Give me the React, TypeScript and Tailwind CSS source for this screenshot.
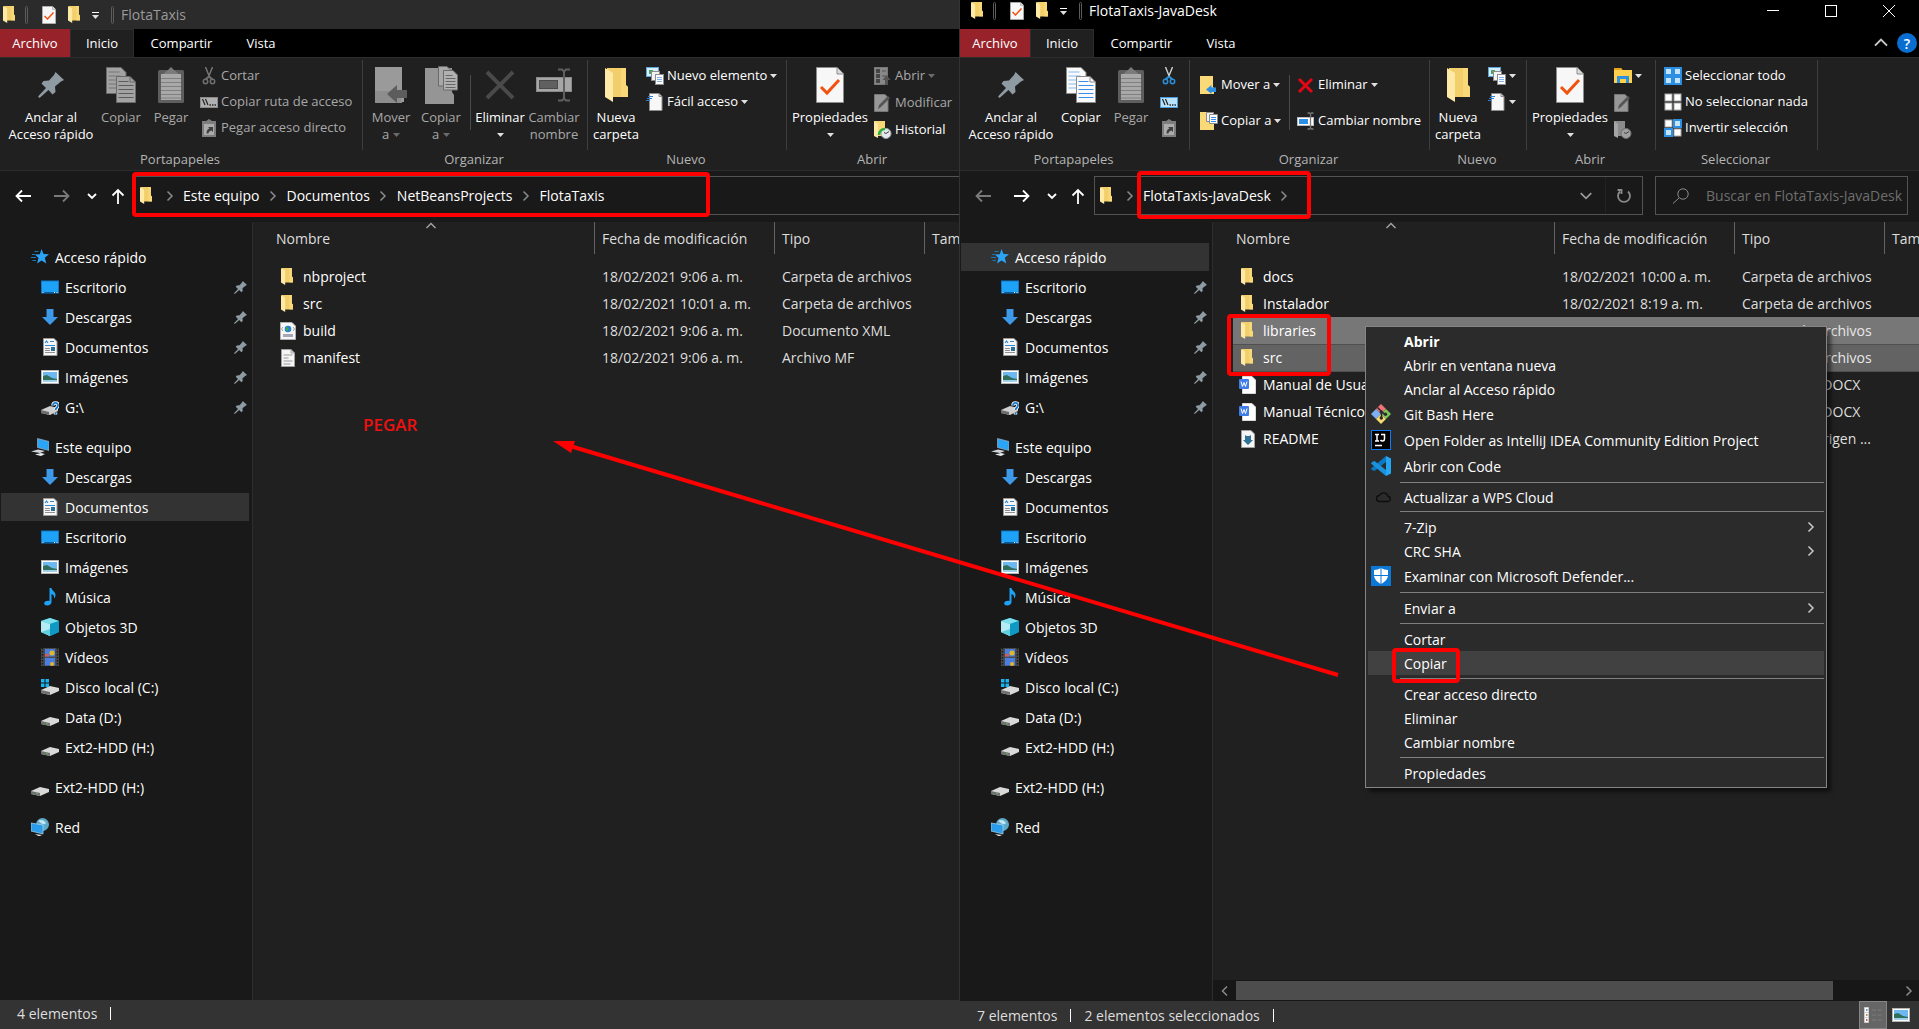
import React from "react";
import type { ReactNode } from "react";

/* ---------- icons ---------- */

function FolderIcon({ big }: { big?: boolean }) {
  return (
    <svg viewBox="0 0 23 34" preserveAspectRatio="none" className={big ? "h-[34px] w-[23px]" : "h-[17px] w-[12px]"}>
      <path d="M2 0h19v17l2 2v10H2z" fill="#f3cf6b" />
      <path d="M2 0h19v17l2 2v10h-7V0z" fill="#fbdc7f" opacity=".7" />
      <path d="M0 0l8 5v29l-8-5z" fill="#ffe9a6" />
    </svg>
  );
}

function CheckDoc({ big }: { big?: boolean }) {
  return (
    <svg viewBox="0 0 28 36" preserveAspectRatio="none" className={big ? "h-9 w-7" : "h-[18px] w-[14px]"}>
      <path d="M.5.5H21L27.500 7v28.500H.5z" fill="#f7f7f7" stroke="#8c8c8c" />
      <path d="M21 .5V7h6.500" fill="#dcdcdc" stroke="#8c8c8c" />
      <path d="M5 20l6 6 12-13" fill="none" stroke="#f0530f" strokeWidth="3" />
    </svg>
  );
}

function PinIcon({ small }: { small?: boolean }) {
  return (
    <svg viewBox="0 0 26 26" className={small ? "size-[13px]" : "size-[26px]"}>
      <path
        d="M17.500 0L26 8l-3 1.500-6 5 .5 5.500-3 2.500-4-4.500L1.500 26 0 24.500 8 16 3.500 11.500 5.500 9l5.500-.5L16 3z"
        fill="#8f9ba3"
      />
    </svg>
  );
}

function CopyDocs({ muted }: { muted?: boolean }) {
  const page = muted ? "#a3a3a3" : "#fafafa";
  const line = muted ? "#5b5b5b" : "#3b8ee8";
  const edge = muted ? "#6a6a6a" : "#8c8c8c";
  return (
    <svg viewBox="0 0 30 36" className="h-9 w-[30px]">
      <path d="M.5.5H15L20 5.500v21H.5z" fill={page} stroke={edge} />
      <path d="M2.500 5h11M2.500 9h12M2.500 13h8M2.500 17h8M2.500 21h8" stroke={line} opacity=".6" />
      <path d="M10.500 9.500H24l5.500 5.500v20.500h-19z" fill={page} stroke={edge} />
      <path d="M24 9.500V15h5.500" fill="none" stroke={edge} />
      <path d="M12.500 14.500h10M12.500 18.500h15M12.500 22.500h15M12.500 26.500h15M12.500 30.500h15" stroke={line} />
    </svg>
  );
}

function PasteIcon() {
  return (
    <svg viewBox="0 0 26 36" className="h-9 w-[26px]">
      <rect y="3" width="26" height="33" rx="1.500" fill="#5e5e5e" />
      <rect x="3" y="7" width="20" height="26" fill="#a9a9a9" />
      <path d="M5 7l5-4 3-3 3 3 5 4z" fill="#7b7b7b" />
      <path d="M3 11.500h20M3 15.500h20M3 19.500h20M3 23.500h20M3 27.500h20M3 31h20" stroke="#808080" />
    </svg>
  );
}

function ScissorsIcon({ muted }: { muted?: boolean }) {
  const c = muted ? "#6f6f6f" : "#2a8fd8";
  const b = muted ? "#7a7a7a" : "#c9d1d6";
  return (
    <svg viewBox="0 0 18 18" className="size-[18px]">
      <path d="M5.500 0l4 10M12.500 0l-4 10" stroke={b} strokeWidth="1.400" fill="none" />
      <path d="M9 9.500l-3.500 3M9 9.500l3.500 3" stroke={c} strokeWidth="2" />
      <circle cx="5.500" cy="14.500" r="2.200" fill="none" stroke={c} strokeWidth="1.500" />
      <circle cx="12.500" cy="14.500" r="2.200" fill="none" stroke={c} strokeWidth="1.500" />
    </svg>
  );
}

function PathIcon({ muted }: { muted?: boolean }) {
  return (
    <svg viewBox="0 0 18 18" className="size-[18px]">
      <rect x=".5" y="4.500" width="17" height="10" fill={muted ? "#b0b0b0" : "#b9e2fb"} stroke={muted ? "#8a8a8a" : "#4d9bd6"} />
      <path d="M2.500 6l2.500 6M5.500 6L8 12" stroke="#222" strokeWidth="1.200" />
      <path d="M9.500 12h1.400M12 12h1.400M14.500 12h1.400" stroke="#222" strokeWidth="1.400" />
    </svg>
  );
}

function PasteShortcutIcon() {
  return (
    <svg viewBox="0 0 18 18" className="size-[18px]">
      <rect x="2" y="2" width="14" height="16" fill="#7d7d7d" />
      <path d="M6 2l3-2 3 2z" fill="#7d7d7d" />
      <rect x="4" y="5" width="10" height="11" fill="#ababab" />
      <path d="M6.500 14.500c0-3 1-4.500 3-5L8 8h5v5l-1.500-1.500c-2 .5-3 1.500-3 3z" fill="#3f3f3f" />
    </svg>
  );
}

function MoveToBig() {
  return (
    <svg viewBox="0 0 32 36" className="h-9 w-8">
      <rect width="27" height="36" fill="#8d8d8d" />
      <path d="M0 0h27v24l2 3v8h-3V24H0z" fill="#9a9a9a" />
      <path d="M12 27l10-9v5h10v8H22v5z" fill="#5c5c5c" />
    </svg>
  );
}

function CopyToBig() {
  return (
    <svg viewBox="0 0 33 38" className="h-[38px] w-[33px]">
      <path d="M0 2h27v24l2 3v9H0z" fill="#959595" />
      <path d="M13.500.5H22L25.500 4v16h-12z" fill="#a8a8a8" stroke="#6a6a6a" />
      <path d="M18.500 4.500H28L32.500 9v15h-14z" fill="#b1b1b1" stroke="#6a6a6a" />
      <path d="M20.500 9.500h7M20.500 12.500h10M20.500 15.500h10M20.500 18.500h10M20.500 21.500h10" stroke="#666" />
    </svg>
  );
}

function DeleteBig() {
  return (
    <svg viewBox="0 0 30 30" className="size-[30px]">
      <path d="M2 2l26 26M28 2L2 28" stroke="#4a4a4a" strokeWidth="4" />
    </svg>
  );
}

function RenameBig() {
  return (
    <svg viewBox="0 0 36 34" className="h-[34px] w-9">
      <rect x=".5" y="9.500" width="35" height="14" fill="#a6a6a6" stroke="#8a8a8a" />
      <rect x="3.500" y="12.500" width="18" height="8" fill="#606060" stroke="#4a4a4a" />
      <path d="M22 1.500h4l2 2 2-2h4M28 3v28M22 32.500h4l2-2 2 2h4" fill="none" stroke="#5f5f5f" strokeWidth="2" />
    </svg>
  );
}

function NewItemIcon() {
  return (
    <svg viewBox="0 0 18 18" className="size-[18px]">
      <rect x=".5" y=".5" width="12" height="9" fill="#d7eefc" stroke="#5aa7d8" />
      <rect x="3" y="3" width="4" height="4" fill="#4aa564" />
      <rect x="5.500" y="4.500" width="8" height="9" fill="#f2f2f2" stroke="#8c8c8c" />
      <rect x="9.500" y="7.500" width="8" height="10" fill="#fff" stroke="#8c8c8c" />
      <path d="M11 10.500h5M11 12.500h5M11 14.500h5" stroke="#7fb2e8" />
    </svg>
  );
}

function EasyAccessIcon() {
  return (
    <svg viewBox="0 0 18 18" className="size-[18px]">
      <path d="M3.500.5h9.500l3 3v14H3.500z" fill="#f7f7f7" stroke="#8c8c8c" />
      <path d="M13 .5v3h3" fill="none" stroke="#8c8c8c" />
      <path d="M2 3.500h5M1 5.500h5M0 7.500h4" stroke="#2b7fd0" />
    </svg>
  );
}

function OpenAppIcon() {
  return (
    <svg viewBox="0 0 18 18" className="size-[18px]">
      <rect x=".5" y=".5" width="13" height="17" fill="#888" stroke="#777" />
      <path d="M2 2h4v4H2zM2 7h4v4H2zM2 12h4v4H2z" fill="#444" />
      <path d="M8 4h4M8 9h4" stroke="#555" />
      <path d="M11 18v-5H8.500L12.500 8l4 5H14v5z" fill="#555" />
    </svg>
  );
}

function OpenFolderIcon() {
  return (
    <svg viewBox="0 0 18 18" className="size-[18px]">
      <path d="M0 1h7l1.500 2H18v13H0z" fill="#ffd04c" />
      <path d="M0 1h7l1.500 2H0z" fill="#e8a21b" />
      <path d="M3 16V9h12v7h-3v-4H6v4z" fill="#2f8fe0" />
    </svg>
  );
}

function EditIcon() {
  return (
    <svg viewBox="0 0 18 18" className="size-[18px]">
      <path d="M.5.5H11l3 3v14H.5z" fill="#979797" stroke="#777" />
      <path d="M4 15l1-4 9-9 2 2-9 9z" fill="#555" />
    </svg>
  );
}

function HistoryIcon({ muted }: { muted?: boolean }) {
  return (
    <svg viewBox="0 0 18 18" className="size-[18px]">
      <path d="M0 0h11v15H0z" fill={muted ? "#8b8b8b" : "#f8d775"} />
      <path d="M0 0l4 3v14l-4-2z" fill={muted ? "#a5a5a5" : "#ffe9a6"} />
      <circle cx="12" cy="12.500" r="5" fill={muted ? "#a0a0a0" : "#e4e8ea"} stroke={muted ? "#6d6d6d" : "#9aa4aa"} />
      <path d="M12 12.500l3-2M12 12.500l-2-1" stroke="#444" />
      {!muted && <path d="M5 14c0-4 3-6 6-6" fill="none" stroke="#2cae3a" strokeWidth="2.500" />}
    </svg>
  );
}

function MoveToSmall() {
  return (
    <svg viewBox="0 0 18 18" className="size-[18px]">
      <path d="M0 0h13v11l1 1v6H0z" fill="#f9d978" />
      <path d="M6 13.500L11.500 9v2.500H16v4.500h-4.500V18z" fill="#2d8fe3" />
    </svg>
  );
}

function CopyToSmall() {
  return (
    <svg viewBox="0 0 18 18" className="size-[18px]">
      <path d="M0 0h13v11l1 1v6H0z" fill="#f9d978" />
      <path d="M6.500.5h7v9h-7z" fill="#f2f2f2" stroke="#8c8c8c" />
      <path d="M9.500 2.500h8v9h-8z" fill="#fff" stroke="#8c8c8c" />
      <path d="M11 5.500h5M11 7.500h5M11 9.500h5" stroke="#3b8ee8" />
    </svg>
  );
}

function RedX() {
  return (
    <svg viewBox="0 0 18 18" className="size-[18px]">
      <path d="M2 3l13 13M15 3L2 16" stroke="#e30613" strokeWidth="3" />
    </svg>
  );
}

function RenameSmall() {
  return (
    <svg viewBox="0 0 18 18" className="size-[18px]">
      <rect x=".5" y="5.500" width="16" height="8" fill="#fff" stroke="#bbb" />
      <rect x="2" y="7" width="9" height="5" fill="#2d8fe3" />
      <path d="M10.500 1h2l1 1 1-1h2M13.500 2v14M10.500 17h2l1-1 1 1h2" fill="none" stroke="#777" strokeWidth="1.300" />
    </svg>
  );
}

function SelectGrid({ on }: { on: boolean[] }) {
  return (
    <svg viewBox="0 0 18 18" className="size-[18px]">
      {on.map((s, i) => (
        <rect
          key={i}
          x={(i % 2) * 9 + 1}
          y={Math.floor(i / 2) * 9 + 1}
          width="7"
          height="7"
          fill={s ? "#c3e5fb" : "#fff"}
          stroke={s ? "#2d8fe3" : "#a8a8a8"}
          strokeWidth={s ? 2 : 1}
        />
      ))}
    </svg>
  );
}

const icons: Record<string, ReactNode> = {
  star: (
    <>
      <path d="M10.500 1l2 5 5.500.3-4.200 3.500 1.500 5.700-4.700-3L6 15.500l1.500-5.500L4 6.500l4.800-.3z" fill="#2ba4f5" />
      <path d="M3.500 3.500h4M1 6.500h3.500M0 9.500h5M1.500 12.500h3.500" stroke="#1c76b8" />
    </>
  ),
  desktop: (
    <>
      <rect x=".5" y="3" width="17" height="12" fill="#1ea2f8" stroke="#0f78c8" />
      <path d="M1 14.500h16" stroke="#0b5f9e" />
      <path d="M1.500 14.500h1M13 14.500h1M15.500 14.500h1" stroke="#fff" />
    </>
  ),
  download: <path d="M5.500 1h7v8h4.500l-8 8-8-8h4.500z" fill="#3d9ae8" />,
  document: (
    <>
      <path d="M2.500.5H13l3 3v14H2.500z" fill="#f7f7f7" stroke="#9a9a9a" />
      <path d="M4 5l1.500-2L7 5M9 3.500h4M4 7.500h10" stroke="#2b8ad6" strokeWidth="1.200" fill="none" />
      <path d="M4 10.500h5M4 12.500h5M4 14.500h10" stroke="#8f8f8f" />
      <rect x="10" y="9" width="4" height="4" fill="#2b6f9a" />
    </>
  ),
  image: (
    <>
      <rect x=".5" y="2.500" width="17" height="13" fill="#fff" stroke="#b5b5b5" />
      <rect x="2" y="4" width="14" height="10" fill="#6db8f0" />
      <path d="M2 8l4-1 5 3 5 1v3H2z" fill="#2f6f5c" />
      <path d="M2 12h14v2H2z" fill="#9fd0e8" />
    </>
  ),
  unknownDrive: (
    <>
      <path d="M0 12l9-4 8 2v3l-8 4-9-2z" fill="#cfcfcf" />
      <path d="M0 12l8 2v3l-8-2z" fill="#6c6c6c" />
      <path d="M12 7.500c0-3.500 5-3.500 5 0 0 2-2.500 2.500-2.500 4.500M14.500 14.500v2" fill="none" stroke="#fff" strokeWidth="3.500" />
      <path d="M12 7.500c0-3.500 5-3.500 5 0 0 2-2.500 2.500-2.500 4.500M14.500 14.500v2" fill="none" stroke="#1f78c4" strokeWidth="1.800" />
    </>
  ),
  pc: (
    <>
      <path d="M6.500.5l11.500 3v9l-11.500-3z" fill="#2ba4f5" stroke="#9fb0bb" strokeWidth=".7" />
      <path d="M0 13.500l7-2 7 1.500-5 2z" fill="#cfd6da" />
      <path d="M4 16.500l6-1.500 4 1-4 2z" fill="#e8ecee" />
    </>
  ),
  music: <path d="M8.500 0h2c.3 3 4 3.500 4 7 0 2-1 3-1.500 3.500.5-3-1-4-2.500-4.500v8c0 2-2 3.500-4.300 3.500-2 0-3-1-3-2.300C3.200 13.500 5.500 12.500 8.500 13z" fill="#1ea2f8" />,
  cube: (
    <>
      <path d="M9 0l9 3v11l-9 4-9-4V3z" fill="#16b4d8" />
      <path d="M9 0l9 3-9 3-9-3z" fill="#7fe0ec" />
      <path d="M0 3l9 3v12l-9-4z" fill="#b5ecf3" />
      <path d="M0 14l9-3v7z" fill="#5fd0dc" />
      <path d="M9 6l9-3v11l-9 4z" fill="#1098c4" />
    </>
  ),
  video: (
    <>
      <rect width="18" height="18" fill="#4a4a4a" />
      <path d="M1.500 0v18M16.500 0v18" stroke="#1a1a1a" strokeWidth="1.500" strokeDasharray="1.500 1.500" />
      <rect x="4" y="1" width="10" height="7.500" fill="#4a7ee0" />
      <rect x="4" y="10" width="10" height="7.500" fill="#4a7ee0" />
      <circle cx="11" cy="5" r="2.500" fill="#e0b92b" />
      <path d="M4 6h4v2.500H4z" fill="#d35a5a" />
      <circle cx="11" cy="16" r="2" fill="#e0b92b" />
    </>
  ),
  osDrive: (
    <>
      <path d="M0 12l9-4 9 2v3l-9 4-9-2z" fill="#d9d9d9" />
      <path d="M0 12l9 2v3l-9-2z" fill="#707070" />
      <path d="M0 1h3.500v3.500H0zM4.500 1H8v3.500H4.500zM0 5.500h3.500V9H0zM4.500 5.500H8V9H4.500z" fill="#19b5f1" />
    </>
  ),
  drive: (
    <>
      <path d="M0 13l9-4 9 2v3l-9 4-9-2z" fill="#d9d9d9" />
      <path d="M0 13l9 2v3l-9-2z" fill="#707070" />
      <path d="M5 15.500l1.500.3" stroke="#4fd05a" />
    </>
  ),
  network: (
    <>
      <circle cx="11.500" cy="6.500" r="6.500" fill="#5fa9c8" />
      <path d="M7 3c3-2 6-1 8 2-2 3-5 0-8-2z" fill="#c5e6f0" />
      <path d="M0 5l12 2v9L0 13z" fill="#2b9cea" stroke="#a9d8f5" strokeWidth=".7" />
      <path d="M4 16l7 1-3 1.500z" fill="#d5dde1" />
    </>
  ),
  xml: (
    <>
      <path d="M1.500.5H13l3.500 3.500v13.500h-15z" fill="#f7f7f7" stroke="#b0b0b0" />
      <circle cx="9" cy="7" r="3.300" fill="#2b7fd0" />
      <path d="M7 5l2.500 1L9 9 7 8z" fill="#3fae49" />
      <path d="M4 5L2.500 7 4 9M14 5l1.500 2L14 9" fill="none" stroke="#888" strokeWidth=".8" />
      <path d="M4 13.500h10" stroke="#a6a6b8" strokeWidth="3" />
    </>
  ),
  text: (
    <>
      <path d="M2.500.5H12l3.500 3.500v13.500h-13z" fill="#f5f5f5" stroke="#a0a0a0" />
      <path d="M12 .5V4h3.500" fill="none" stroke="#a0a0a0" />
      <path d="M4.500 6h9M4.500 9h5M4.500 12h9M4.500 15h7" stroke="#9a9a9a" />
    </>
  ),
  docx: (
    <>
      <path d="M3.500.5H13L16.500 4v13.500h-13z" fill="#fff" stroke="#d9d9d9" />
      <rect y="3" width="10" height="10" rx="1" fill="#3f7ee8" />
      <path d="M2 5.500l1.500 5L5 6.500l1.500 4 1.500-5" fill="none" stroke="#fff" />
    </>
  ),
  markdown: (
    <>
      <path d="M2.500.5H12l3.500 3.500v13.500h-13z" fill="#f5f5f5" stroke="#a0a0a0" />
      <path d="M6 5l1.500 1h3L12 5v5h2l-5 5-5-5h2z" fill="#2f7396" />
    </>
  ),
};

function Icon({ name }: { name: string }) {
  return (
    <svg viewBox="0 0 18 18" className="size-[18px] shrink-0">
      {icons[name]}
    </svg>
  );
}

function Chevron({ dir, className }: { dir: "right" | "left" | "down" | "up"; className: string }) {
  const d = {
    right: "M3.500 1.500L8 6l-4.500 4.500",
    left: "M8 1.500L3.500 6 8 10.500",
    down: "M1.500 3.500L6 8l4.500-4.500",
    up: "M1.500 8L6 3.500 10.500 8",
  }[dir];
  return (
    <svg viewBox="0 0 12 12" className={className}>
      <path d={d} fill="none" stroke="currentColor" strokeWidth="1.500" />
    </svg>
  );
}

function Caret({ muted }: { muted?: boolean }) {
  return (
    <svg viewBox="0 0 7 4" className={muted ? "h-1 w-[7px] text-[#6b6b6b]" : "h-1 w-[7px] text-[#e0e0e0]"}>
      <path d="M0 0h7L3.500 4z" fill="currentColor" />
    </svg>
  );
}

/* ---------- ribbon ---------- */

function BigButton({ icon, lines, width, muted, caret }: { icon: ReactNode; lines: string[]; width: string; muted?: boolean; caret?: boolean }) {
  return (
    <button type="button" className={`flex shrink-0 flex-col items-center pt-[7px] ${width} ${muted ? "text-[#a8a8a8]" : "text-white"}`}>
      <span className="flex h-9 items-center justify-center">{icon}</span>
      <span className="mt-1.5 leading-[17px] whitespace-nowrap">{lines[0]}</span>
      <span className="flex h-[17px] items-center gap-1 leading-[17px] whitespace-nowrap">
        {lines[1]}
        {caret && <Caret muted={muted} />}
      </span>
    </button>
  );
}

function SmallButton({ icon, label, name, muted, caret }: { icon: ReactNode; label?: string; name?: string; muted?: boolean; caret?: boolean }) {
  return (
    <button
      type="button"
      aria-label={label ? undefined : name}
      className={`flex h-[26px] shrink-0 items-center gap-[3px] whitespace-nowrap ${muted ? "text-[#a8a8a8]" : "text-white"}`}
    >
      {icon}
      {label}
      {caret && <Caret muted={muted} />}
    </button>
  );
}

function Group({ title, width, children, last }: { title: string; width: string; children: ReactNode; last?: boolean }) {
  return (
    <section aria-label={title} className={`flex shrink-0 flex-col ${width}`}>
      <div className={`mt-0.5 flex h-[90px] ${last ? "" : "border-r border-[#3e3e3e]"}`}>{children}</div>
      <h2 className="pr-[3px] text-center leading-[18px] text-[#b4b4b4]">{title}</h2>
    </section>
  );
}

function Rows({ children, className }: { children: ReactNode; className: string }) {
  return <div className={`flex flex-col items-start pt-[3px] ${className}`}>{children}</div>;
}

function Divider({ className }: { className: string }) {
  return <span className={`mt-[15px] h-[55px] w-px shrink-0 bg-[#4a4a4a] ${className}`} />;
}

function Ribbon({ children }: { children: ReactNode }) {
  return <div className="flex h-[114px] overflow-hidden border-y border-[#2d2d2d] bg-[#202020] text-[13px]">{children}</div>;
}

function LeftRibbon() {
  return (
    <Ribbon>
      <Group title="Portapapeles" width="w-[363px]">
        <BigButton width="ml-1.5 w-[90px]" icon={<PinIcon />} lines={["Anclar al", "Acceso rápido"]} />
        <BigButton width="w-[50px]" icon={<CopyDocs muted />} lines={["Copiar"]} muted />
        <BigButton width="w-[50px]" icon={<PasteIcon />} lines={["Pegar"]} muted />
        <Rows className="ml-1">
          <SmallButton icon={<ScissorsIcon muted />} label="Cortar" muted />
          <SmallButton icon={<PathIcon muted />} label="Copiar ruta de acceso" muted />
          <SmallButton icon={<PasteShortcutIcon />} label="Pegar acceso directo" muted />
        </Rows>
      </Group>
      <Group title="Organizar" width="w-[225px]">
        <BigButton width="ml-[3px] w-[50px]" icon={<MoveToBig />} lines={["Mover", "a"]} muted caret />
        <BigButton width="w-[50px]" icon={<CopyToBig />} lines={["Copiar", "a"]} muted caret />
        <Divider className="ml-1" />
        <BigButton width="ml-0.5 w-[54px]" icon={<DeleteBig />} lines={["Eliminar"]} caret />
        <BigButton width="w-[54px]" icon={<RenameBig />} lines={["Cambiar", "nombre"]} muted />
      </Group>
      <Group title="Nuevo" width="w-[199px]">
        <BigButton width="ml-[3px] w-[50px]" icon={<FolderIcon big />} lines={["Nueva", "carpeta"]} />
        <Rows className="ml-[5px]">
          <SmallButton icon={<NewItemIcon />} label="Nuevo elemento" caret />
          <SmallButton icon={<EasyAccessIcon />} label="Fácil acceso" caret />
        </Rows>
      </Group>
      <Group title="Abrir" width="w-[173px]" last>
        <BigButton width="ml-[3px] w-20" icon={<CheckDoc big />} lines={["Propiedades"]} caret />
        <Rows className="ml-1 gap-px">
          <SmallButton icon={<OpenAppIcon />} label="Abrir" muted caret />
          <SmallButton icon={<EditIcon />} label="Modificar" muted />
          <SmallButton icon={<HistoryIcon />} label="Historial" />
        </Rows>
      </Group>
    </Ribbon>
  );
}

function RightRibbon() {
  return (
    <Ribbon>
      <Group title="Portapapeles" width="w-[230px]">
        <BigButton width="ml-1.5 w-[90px]" icon={<PinIcon />} lines={["Anclar al", "Acceso rápido"]} />
        <BigButton width="w-[50px]" icon={<CopyDocs />} lines={["Copiar"]} />
        <BigButton width="w-[50px]" icon={<PasteIcon />} lines={["Pegar"]} muted />
        <Rows className="ml-1">
          <SmallButton icon={<ScissorsIcon />} name="Cortar" />
          <SmallButton icon={<PathIcon />} name="Copiar ruta de acceso" />
          <SmallButton icon={<PasteShortcutIcon />} name="Pegar acceso directo" muted />
        </Rows>
      </Group>
      <Group title="Organizar" width="w-[240px]">
        <div className="ml-2.5 flex w-[89px] flex-col items-start gap-2.5 pt-3">
          <SmallButton icon={<MoveToSmall />} label="Mover a" caret />
          <SmallButton icon={<CopyToSmall />} label="Copiar a" caret />
        </div>
        <Divider className="" />
        <div className="ml-[7px] flex flex-col items-start gap-2.5 pt-3">
          <SmallButton icon={<RedX />} label="Eliminar" caret />
          <SmallButton icon={<RenameSmall />} label="Cambiar nombre" />
        </div>
      </Group>
      <Group title="Nuevo" width="w-[97px]">
        <BigButton width="ml-[3px] w-[50px]" icon={<FolderIcon big />} lines={["Nueva", "carpeta"]} />
        <Rows className="ml-[5px]">
          <SmallButton icon={<NewItemIcon />} name="Nuevo elemento" caret />
          <SmallButton icon={<EasyAccessIcon />} name="Fácil acceso" caret />
        </Rows>
      </Group>
      <Group title="Abrir" width="w-[129px]">
        <BigButton width="ml-[3px] w-20" icon={<CheckDoc big />} lines={["Propiedades"]} caret />
        <Rows className="ml-1 gap-px">
          <SmallButton icon={<OpenFolderIcon />} name="Abrir" caret />
          <SmallButton icon={<EditIcon />} name="Modificar" muted />
          <SmallButton icon={<HistoryIcon muted />} name="Historial" muted />
        </Rows>
      </Group>
      <Group title="Seleccionar" width="w-[162px]">
        <Rows className="ml-2">
          <SmallButton icon={<SelectGrid on={[true, true, true, true]} />} label="Seleccionar todo" />
          <SmallButton icon={<SelectGrid on={[false, false, false, false]} />} label="No seleccionar nada" />
          <SmallButton icon={<SelectGrid on={[false, true, true, false]} />} label="Invertir selección" />
        </Rows>
      </Group>
    </Ribbon>
  );
}

/* ---------- window chrome ---------- */

function TitleBar({ title, active }: { title: string; active?: boolean }) {
  return (
    <header className={`flex h-[29px] items-center ${active ? "bg-black pb-2 pl-[11px]" : "bg-[#2b2b2b] pl-[3px]"}`}>
      <FolderIcon />
      <span className="ml-2.5 h-[18px] w-[3px] rounded-sm border border-[#5c5c5c]" />
      <button type="button" aria-label="Propiedades" className="ml-3.5">
        <CheckDoc />
      </button>
      <button type="button" aria-label="Nueva carpeta" className="ml-3">
        <FolderIcon />
      </button>
      <button type="button" aria-label="Personalizar barra" className="ml-3 flex flex-col items-center gap-0.5 pt-0.5">
        <span className="h-px w-[7px] bg-white" />
        <Caret />
      </button>
      <span className="ml-3 h-[18px] w-[3px] rounded-sm border border-[#5c5c5c]" />
      <h1 className={`ml-[7px] text-[14px] ${active ? "text-white" : "text-[#9a9a9a]"}`}>{title}</h1>
      {active && (
        <div className="mr-px ml-auto flex">
          <button type="button" aria-label="Minimizar" className="flex w-[58px] justify-center">
            <svg viewBox="0 0 12 12" className="size-3"><path d="M0 5.500h12" stroke="#fff" /></svg>
          </button>
          <button type="button" aria-label="Maximizar" className="flex w-[58px] justify-center">
            <svg viewBox="0 0 12 12" className="size-3"><rect x=".5" y=".5" width="11" height="11" fill="none" stroke="#fff" /></svg>
          </button>
          <button type="button" aria-label="Cerrar" className="flex w-[58px] justify-center">
            <svg viewBox="0 0 12 12" className="size-3"><path d="M0 0l12 12M12 0L0 12" stroke="#fff" /></svg>
          </button>
        </div>
      )}
    </header>
  );
}

function Tabs({ active }: { active?: boolean }) {
  return (
    <div className="flex h-7 bg-black text-[13px] text-white">
      <button type="button" className="w-[70px] bg-[#97222a] pt-px">Archivo</button>
      <button type="button" className="mb-[-1px] w-16 border-x border-t border-[#2d2d2d] bg-[#202020]">Inicio</button>
      <button type="button" className="w-[95px] pt-px">Compartir</button>
      <button type="button" className="w-16 pt-px">Vista</button>
      {active && (
        <div className="ml-auto flex items-center gap-2 pr-0.5">
          <button type="button" aria-label="Minimizar la cinta" className="text-[#c8c8c8]">
            <Chevron dir="up" className="size-4" />
          </button>
          <button type="button" aria-label="Ayuda" className="flex size-5 items-center justify-center rounded-full bg-[#0a6ed1] text-[14px] font-semibold">
            ?
          </button>
        </div>
      )}
    </div>
  );
}

function ArrowButton({ name, d, muted, width }: { name: string; d: string; muted?: boolean; width: string }) {
  return (
    <button type="button" aria-label={name} className={`flex shrink-0 items-center justify-center ${width} ${muted ? "text-[#7a7a7a]" : "text-white"}`}>
      <svg viewBox="0 0 16 16" className="size-4">
        <path d={d} fill="none" stroke="currentColor" strokeWidth="1.800" />
      </svg>
    </button>
  );
}

function AddressBar({ crumbs, active }: { crumbs: string[]; active?: boolean }) {
  return (
    <div className={`flex h-[51px] items-stretch bg-[#191919] pt-[5px] pb-[7px] pl-[3px] text-[14px] ${active ? "pr-[11px]" : ""}`}>
      <ArrowButton name="Atrás" width="w-[39px]" muted={active} d="M16 8H1M7 2.500L1.500 8 7 13.500" />
      <ArrowButton name="Adelante" width="w-[39px]" muted={!active} d="M0 8h15M9 2.500L14.500 8 9 13.500" />
      <ArrowButton name="Ubicaciones recientes" width="w-[21px]" d="M4 6l4 4 4-4" />
      <ArrowButton name="Arriba" width="w-8" d="M8 16V2M2.500 7.500L8 2l5.500 5.500" />
      <div className={`flex grow items-center border-y border-l border-[#535353] pl-[5px] ${active ? "border-r" : ""}`}>
        <span className="w-4 shrink-0"><FolderIcon /></span>
        <ol className="flex items-center">
          {crumbs.map((c) => (
            <li key={c} className="flex items-center">
              <span className="flex w-[27px] justify-center text-[#8a8a8a]"><Chevron dir="right" className="size-3" /></span>
              <a href="#" className="whitespace-nowrap text-white">{c}</a>
            </li>
          ))}
        </ol>
        {active && (
          <>
            <span className="flex w-[27px] justify-center text-[#8a8a8a]"><Chevron dir="right" className="size-3" /></span>
            <button type="button" aria-label="Ubicaciones anteriores" className="mr-3 ml-auto text-[#9a9a9a]">
              <Chevron dir="down" className="size-3.5" />
            </button>
            <button type="button" aria-label="Actualizar" className="flex h-full w-[37px] items-center justify-center border-l border-[#222]">
              <svg viewBox="0 0 16 16" className="size-4">
                <path d="M4 3.500A6 6 0 1 0 12 3.500M1.500 2h4v4" fill="none" stroke="#8a8a8a" strokeWidth="1.800" />
              </svg>
            </button>
          </>
        )}
      </div>
      {active && (
        <label className="ml-3 flex w-[253px] shrink-0 items-center border border-[#535353] pl-[17px]">
          <svg viewBox="0 0 16 16" className="size-4 shrink-0">
            <circle cx="10" cy="6" r="5.200" fill="none" stroke="#8a8a8a" />
            <path d="M6 10l-6 5.500" stroke="#8a8a8a" />
          </svg>
          <input
            type="text"
            aria-label="Buscar"
            placeholder="Buscar en FlotaTaxis-JavaDesk"
            className="ml-[17px] w-full min-w-0 bg-transparent text-white outline-none placeholder:text-[#6e6e6e]"
          />
        </label>
      )}
    </div>
  );
}

/* ---------- navigation pane ---------- */

type NavItem = { icon: string; label: string; top?: boolean; pin?: boolean; gap?: boolean };

const navItems: NavItem[] = [
  { icon: "star", label: "Acceso rápido", top: true },
  { icon: "desktop", label: "Escritorio", pin: true },
  { icon: "download", label: "Descargas", pin: true },
  { icon: "document", label: "Documentos", pin: true },
  { icon: "image", label: "Imágenes", pin: true },
  { icon: "unknownDrive", label: "G:\\", pin: true },
  { icon: "pc", label: "Este equipo", top: true, gap: true },
  { icon: "download", label: "Descargas" },
  { icon: "document", label: "Documentos" },
  { icon: "desktop", label: "Escritorio" },
  { icon: "image", label: "Imágenes" },
  { icon: "music", label: "Música" },
  { icon: "cube", label: "Objetos 3D" },
  { icon: "video", label: "Vídeos" },
  { icon: "osDrive", label: "Disco local (C:)" },
  { icon: "drive", label: "Data (D:)" },
  { icon: "drive", label: "Ext2-HDD (H:)" },
  { icon: "drive", label: "Ext2-HDD (H:)", top: true, gap: true },
  { icon: "network", label: "Red", top: true, gap: true },
];

function Sidebar({ selected }: { selected: number }) {
  return (
    <nav className="w-[253px] shrink-0 border-r border-[#2d2d2d] bg-[#191919] pt-[21px] text-[14px] text-white">
      <ul className="flex flex-col gap-0.5">
        {navItems.map((item, i) => (
          <li key={i} className={item.gap ? "mt-2.5" : ""}>
            <button
              type="button"
              className={`mx-px flex h-7 w-[248px] items-center gap-1.5 pr-0.5 ${item.top ? "pl-[30px]" : "pl-10"} ${i === selected ? "bg-[#333]" : ""}`}
            >
              <Icon name={item.icon} />
              {item.label}
              {item.pin && <span className="ml-auto"><PinIcon small /></span>}
            </button>
          </li>
        ))}
      </ul>
    </nav>
  );
}

/* ---------- file list ---------- */

type FileRow = { icon: string; name: string; date: string; type: string; state?: "focus" | "selected" };

const leftFiles: FileRow[] = [
  { icon: "folder", name: "nbproject", date: "18/02/2021 9:06 a. m.", type: "Carpeta de archivos" },
  { icon: "folder", name: "src", date: "18/02/2021 10:01 a. m.", type: "Carpeta de archivos" },
  { icon: "xml", name: "build", date: "18/02/2021 9:06 a. m.", type: "Documento XML" },
  { icon: "text", name: "manifest", date: "18/02/2021 9:06 a. m.", type: "Archivo MF" },
];

const rightFiles: FileRow[] = [
  { icon: "folder", name: "docs", date: "18/02/2021 10:00 a. m.", type: "Carpeta de archivos" },
  { icon: "folder", name: "Instalador", date: "18/02/2021 8:19 a. m.", type: "Carpeta de archivos" },
  { icon: "folder", name: "libraries", date: "18/02/2021 10:02 a. m.", type: "Carpeta de archivos", state: "focus" },
  { icon: "folder", name: "src", date: "18/02/2021 10:02 a. m.", type: "Carpeta de archivos", state: "selected" },
  { icon: "docx", name: "Manual de Usuario", date: "18/02/2021 8:19 a. m.", type: "Documento DOCX" },
  { icon: "docx", name: "Manual Técnico", date: "18/02/2021 8:19 a. m.", type: "Documento DOCX" },
  { icon: "markdown", name: "README", date: "18/02/2021 8:19 a. m.", type: "Archivo de origen ..." },
];

const rowStyle = {
  none: "text-[#dedede]",
  focus: "border-b border-[#505050] bg-[#777] text-[#e8e8e8]",
  selected: "border-b border-[#505050] bg-[#636363] text-[#e8e8e8]",
};

function FileTable({ files }: { files: FileRow[] }) {
  return (
    <div className="min-w-0 grow overflow-hidden pl-5">
      <table className="w-full table-fixed border-collapse text-left text-[14px]">
        <colgroup>
          <col className="w-[322px]" />
          <col className="w-[180px]" />
          <col className="w-[150px]" />
          <col />
        </colgroup>
        <thead>
          <tr className="h-[41px] align-top text-[#dedede]">
            <th scope="col" className="relative p-0 font-normal">
              <div className="h-8 border-r border-[#636363] pl-[3px] leading-[33px]">Nombre</div>
              <span className="absolute top-[-2px] left-[152px] text-[#a0a0a0]"><Chevron dir="up" className="size-3" /></span>
            </th>
            <th scope="col" className="p-0 font-normal">
              <div className="h-8 border-r border-[#636363] pl-[7px] leading-[33px]">Fecha de modificación</div>
            </th>
            <th scope="col" className="p-0 font-normal">
              <div className="h-8 border-r border-[#636363] pl-[7px] leading-[33px]">Tipo</div>
            </th>
            <th scope="col" className="overflow-hidden p-0 font-normal">
              <div className="h-8 pl-[7px] leading-[33px]">Tamaño</div>
            </th>
          </tr>
        </thead>
        <tbody>
          {files.map((f, i) => (
            <tr key={i} className={`h-[27px] whitespace-nowrap ${rowStyle[f.state ?? "none"]}`}>
              <td className="p-0 pl-[6px]">
                <div className="flex items-center text-white">
                  <span className="flex w-6 items-center">{f.icon === "folder" ? <span className="pl-0.5"><FolderIcon /></span> : <Icon name={f.icon} />}</span>
                  {f.name}
                </div>
              </td>
              <td className="p-0 pl-[7px]">{f.date}</td>
              <td className="p-0 pl-[7px]">{f.type}</td>
              <td className="p-0" />
            </tr>
          ))}
        </tbody>
      </table>
    </div>
  );
}

function HorizontalScroll() {
  return (
    <div className="flex h-[21px] items-center bg-[#171717] text-[#8a8a8a]">
      <button type="button" aria-label="Desplazar a la izquierda" className="flex w-[23px] justify-center"><Chevron dir="left" className="size-3" /></button>
      <div className="flex h-[19px] grow">
        <div className="w-[90%] bg-[#4d4d4d]" />
      </div>
      <button type="button" aria-label="Desplazar a la derecha" className="flex w-5 justify-center"><Chevron dir="right" className="size-3" /></button>
    </div>
  );
}

function StatusBar({ texts, active }: { texts: string[]; active?: boolean }) {
  return (
    <footer className={`flex items-center bg-[#333] pl-[17px] text-[14px] text-[#dedede] ${active ? "h-7" : "h-[29px] pb-0.5"}`}>
      {texts.map((t) => (
        <span key={t} className="mr-[13px] flex items-center gap-[13px]">
          {t}
          <span className="h-[13px] w-px bg-white" />
        </span>
      ))}
      {active && (
        <div className="ml-auto flex h-full pr-1">
          <button type="button" aria-label="Detalles" className="flex w-7 items-center justify-center border border-[#858585] bg-[#666]">
            <svg viewBox="0 0 18 16" className="h-4 w-[18px]">
              <path d="M.5.500h4v15h-4zM.5 5.500h4M.5 10.500h4" fill="#fff" stroke="#ccc" />
              <path d="M2 3h1.500" stroke="#3a6fb0" strokeWidth="1.500" />
              <path d="M2 8h1.500" stroke="#8a6a2a" strokeWidth="1.500" />
              <path d="M2 13h1.500" stroke="#b03020" strokeWidth="1.500" />
              <path d="M8 3h4M13.500 3h4M8 8h4M13.500 8h4M8 13h4M13.500 13h4" stroke="#7c7c7c" />
            </svg>
          </button>
          <button type="button" aria-label="Iconos grandes" className="flex w-7 items-center justify-center"><Icon name="image" /></button>
        </div>
      )}
    </footer>
  );
}

/* ---------- context menu ---------- */

type MenuEntry = { label: string; icon?: string; bold?: boolean; sub?: boolean; hover?: boolean; height?: string } | "sep";

const menu: MenuEntry[] = [
  { label: "Abrir", bold: true },
  { label: "Abrir en ventana nueva" },
  { label: "Anclar al Acceso rápido" },
  { label: "Git Bash Here", icon: "git", height: "h-[26px]" },
  { label: "Open Folder as IntelliJ IDEA Community Edition Project", icon: "idea", height: "h-[26px]" },
  { label: "Abrir con Code", icon: "code", height: "h-[26px]" },
  "sep",
  { label: "Actualizar a WPS Cloud", icon: "cloud", height: "h-[22px]" },
  "sep",
  { label: "7-Zip", sub: true },
  { label: "CRC SHA", sub: true },
  { label: "Examinar con Microsoft Defender...", icon: "defender", height: "h-[26px]" },
  "sep",
  { label: "Enviar a", sub: true },
  "sep",
  { label: "Cortar" },
  { label: "Copiar", hover: true },
  "sep",
  { label: "Crear acceso directo" },
  { label: "Eliminar" },
  { label: "Cambiar nombre" },
  "sep",
  { label: "Propiedades" },
];

const menuIcons: Record<string, ReactNode> = {
  git: (
    <>
      <path d="M10 0l5 5-5 5-5-5z" fill="#f27474" />
      <path d="M5 5l5 5-5 5-5-5z" fill="#7db0f5" />
      <path d="M15 5l5 5-5 5-5-5z" fill="#7fc65a" />
      <path d="M10 10l5 5-5 5-5-5z" fill="#f5da70" />
      <path d="M6.500 3.500l4 4V15M10.500 8l4 2.500" fill="none" stroke="#2b2b2b" strokeWidth="1.500" />
      <circle cx="10.300" cy="8" r="1.700" fill="#2b2b2b" />
      <circle cx="10.300" cy="14" r="1.700" fill="#2b2b2b" />
      <circle cx="14.500" cy="10.300" r="1.700" fill="#2b2b2b" />
    </>
  ),
  idea: (
    <>
      <rect x=".5" y=".5" width="19" height="19" fill="#000" stroke="#0f7cf5" />
      <path d="M4 4.500h4M6 4.500V11M4 11h4M10 4.500h3.500V9c0 2.500-3 2.500-4 1M4 15.500h7" fill="none" stroke="#fff" strokeWidth="1.500" />
    </>
  ),
  code: (
    <>
      <path d="M15 0l5 2.500v15L15 20z" fill="#22a7f2" />
      <path d="M15 0v6L3.500 15 1 14 0 12.500z" fill="#0a78c2" />
      <path d="M15 20v-6L3.500 5 1 6 0 7.500z" fill="#1a93dc" />
    </>
  ),
  cloud: <path d="M8.500 14.500h8a2.500 2.500 0 0 0 .5-5 4.500 4.500 0 0 0-8.500-1 3 3 0 0 0 0 6z" fill="none" stroke="#0d0d0d" strokeWidth="1.300" />,
  defender: (
    <>
      <rect width="20" height="20" fill="#0b78d6" />
      <path d="M10 2c2 1.300 4.500 2 7 2v5c0 4-3 7-7 9-4-2-7-5-7-9V4c2.500 0 5-.7 7-2z" fill="#fff" />
      <path d="M10 2v16M3 9.500h14" stroke="#0b78d6" />
    </>
  ),
};

function ContextMenu() {
  return (
    <ul role="menu" className="absolute top-[326px] left-[405px] w-[462px] border border-[#858585] bg-[#2b2b2b] p-0.5 text-[14px] text-white shadow-[4px_4px_4px_rgba(0,0,0,0.5)]">
      {menu.map((m, i) =>
        m === "sep" ? (
          <li key={i} role="separator" className="flex h-[7px] items-center pl-8">
            <span className="h-px w-full bg-[#808080]" />
          </li>
        ) : (
          <li key={i} role="none">
            <button
              type="button"
              role="menuitem"
              className={`flex w-full items-center pr-[7px] pl-[3px] text-left ${m.height ?? "h-6"} ${m.hover ? "bg-[#414141]" : ""} ${m.bold ? "font-bold" : ""}`}
            >
              <span className="mr-[13px] size-5 shrink-0">
                {m.icon && <svg viewBox="0 0 20 20" className="size-5">{menuIcons[m.icon]}</svg>}
              </span>
              <span className="whitespace-nowrap">{m.label}</span>
              {m.sub && <span className="ml-auto text-[#c8c8c8]"><Chevron dir="right" className="size-3" /></span>}
            </button>
          </li>
        ),
      )}
    </ul>
  );
}

/* ---------- annotations ---------- */

function Mark({ className }: { className: string }) {
  return <div className={`pointer-events-none absolute rounded-sm border-4 border-[#ff0000] ${className}`} />;
}

export default function App() {
  return (
    <main className="relative flex min-h-screen overflow-hidden bg-[#202020] font-['Open_Sans',sans-serif]">
      <section className="relative flex min-w-0 flex-1 flex-col border-r border-[#333]">
        <TitleBar title="FlotaTaxis" />
        <Tabs />
        <LeftRibbon />
        <AddressBar crumbs={["Este equipo", "Documentos", "NetBeansProjects", "FlotaTaxis"]} />
        <div className="flex grow">
          <Sidebar selected={8} />
          <FileTable files={leftFiles} />
        </div>
        <StatusBar texts={["4 elementos"]} />
        <Mark className="top-[172px] left-[132px] h-[45px] w-[578px]" />
        <p className="absolute top-[413px] left-[363px] text-[17px] leading-6 font-semibold text-[#f01010]">PEGAR</p>
      </section>

      <section className="relative flex min-w-0 flex-1 flex-col">
        <TitleBar title="FlotaTaxis-JavaDesk" active />
        <Tabs active />
        <RightRibbon />
        <AddressBar crumbs={["FlotaTaxis-JavaDesk"]} active />
        <div className="flex grow">
          <Sidebar selected={0} />
          <div className="flex min-w-0 grow flex-col">
            <div className="flex grow"><FileTable files={rightFiles} /></div>
            <HorizontalScroll />
          </div>
        </div>
        <StatusBar texts={["7 elementos", "2 elementos seleccionados"]} active />
        <ContextMenu />
        <Mark className="top-[171px] left-[177px] h-[48px] w-[174px]" />
        <Mark className="top-[314px] left-[267px] h-[62px] w-[104px]" />
        <Mark className="top-[648px] left-[432px] h-[35px] w-[68px]" />
      </section>

      <svg viewBox="0 0 790 240" className="pointer-events-none absolute top-[438px] left-[552px] h-[240px] w-[790px]">
        <path d="M18 8L786 237" stroke="#ff0000" strokeWidth="4" />
        <path d="M1 3l22 0-4 12z" fill="#ff0000" />
      </svg>
    </main>
  );
}
